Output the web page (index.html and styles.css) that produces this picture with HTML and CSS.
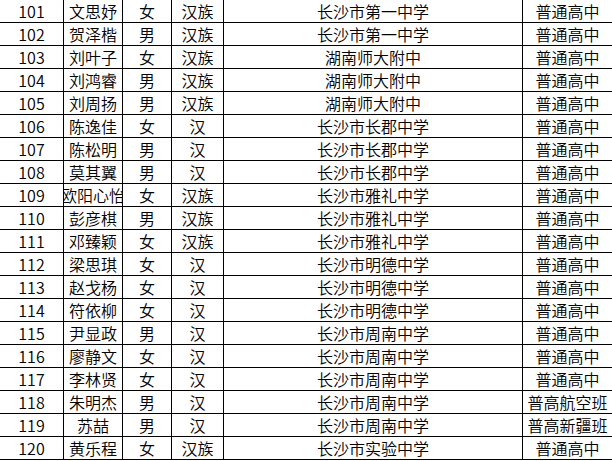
FILE: index.html
```html
<!DOCTYPE html>
<html lang="zh-CN">
<head>
<meta charset="utf-8">
<link rel="stylesheet" href="styles.css">
</head>
<body>
<div class="sheet">
<div class="c">101</div><div class="c">文思妤</div><div class="c">女</div><div class="c">汉族</div><div class="c">长沙市第一中学</div><div class="c last">普通高中</div>
<div class="c">102</div><div class="c">贺泽楷</div><div class="c">男</div><div class="c">汉族</div><div class="c">长沙市第一中学</div><div class="c last">普通高中</div>
<div class="c">103</div><div class="c">刘叶子</div><div class="c">女</div><div class="c">汉族</div><div class="c">湖南师大附中</div><div class="c last">普通高中</div>
<div class="c">104</div><div class="c">刘鸿睿</div><div class="c">男</div><div class="c">汉族</div><div class="c">湖南师大附中</div><div class="c last">普通高中</div>
<div class="c">105</div><div class="c">刘周扬</div><div class="c">男</div><div class="c">汉族</div><div class="c">湖南师大附中</div><div class="c last">普通高中</div>
<div class="c">106</div><div class="c">陈逸佳</div><div class="c">女</div><div class="c">汉</div><div class="c">长沙市长郡中学</div><div class="c last">普通高中</div>
<div class="c">107</div><div class="c">陈松明</div><div class="c">男</div><div class="c">汉</div><div class="c">长沙市长郡中学</div><div class="c last">普通高中</div>
<div class="c">108</div><div class="c">莫其翼</div><div class="c">男</div><div class="c">汉</div><div class="c">长沙市长郡中学</div><div class="c last">普通高中</div>
<div class="c">109</div><div class="c">欧阳心怡</div><div class="c">女</div><div class="c">汉族</div><div class="c">长沙市雅礼中学</div><div class="c last">普通高中</div>
<div class="c">110</div><div class="c">彭彦棋</div><div class="c">男</div><div class="c">汉族</div><div class="c">长沙市雅礼中学</div><div class="c last">普通高中</div>
<div class="c">111</div><div class="c">邓臻颖</div><div class="c">女</div><div class="c">汉族</div><div class="c">长沙市雅礼中学</div><div class="c last">普通高中</div>
<div class="c">112</div><div class="c">梁思琪</div><div class="c">女</div><div class="c">汉</div><div class="c">长沙市明德中学</div><div class="c last">普通高中</div>
<div class="c">113</div><div class="c">赵戈杨</div><div class="c">女</div><div class="c">汉</div><div class="c">长沙市明德中学</div><div class="c last">普通高中</div>
<div class="c">114</div><div class="c">符依柳</div><div class="c">女</div><div class="c">汉</div><div class="c">长沙市明德中学</div><div class="c last">普通高中</div>
<div class="c">115</div><div class="c">尹显政</div><div class="c">男</div><div class="c">汉</div><div class="c">长沙市周南中学</div><div class="c last">普通高中</div>
<div class="c">116</div><div class="c">廖静文</div><div class="c">女</div><div class="c">汉</div><div class="c">长沙市周南中学</div><div class="c last">普通高中</div>
<div class="c">117</div><div class="c">李林贤</div><div class="c">女</div><div class="c">汉</div><div class="c">长沙市周南中学</div><div class="c last">普通高中</div>
<div class="c">118</div><div class="c">朱明杰</div><div class="c">男</div><div class="c">汉</div><div class="c">长沙市周南中学</div><div class="c last">普高航空班</div>
<div class="c">119</div><div class="c">苏喆</div><div class="c">男</div><div class="c">汉</div><div class="c">长沙市周南中学</div><div class="c last">普高新疆班</div>
<div class="c">120</div><div class="c">黄乐程</div><div class="c">女</div><div class="c">汉族</div><div class="c">长沙市实验中学</div><div class="c last">普通高中</div>
</div>
</body>
</html>
```

FILE: styles.css
```css
html, body {
  margin: 0;
  padding: 0;
  background: #fff;
}

.sheet {
  display: grid;
  grid-template-columns: 64px 59px 49px 52px 299px 89px;
  grid-auto-rows: 23px;
  width: 612px;
  font-family: "Noto Sans CJK SC", "Noto Sans", sans-serif;
  font-size: 16px;
  font-weight: 350;
  color: #000;
}

.c {
  display: flex;
  align-items: center;
  justify-content: center;
  overflow: hidden;
  white-space: nowrap;
  border-right: 1px solid #000;
  border-bottom: 1px solid #000;
  line-height: 22px;
}

.c.last {
  border-right: none;
}
```
